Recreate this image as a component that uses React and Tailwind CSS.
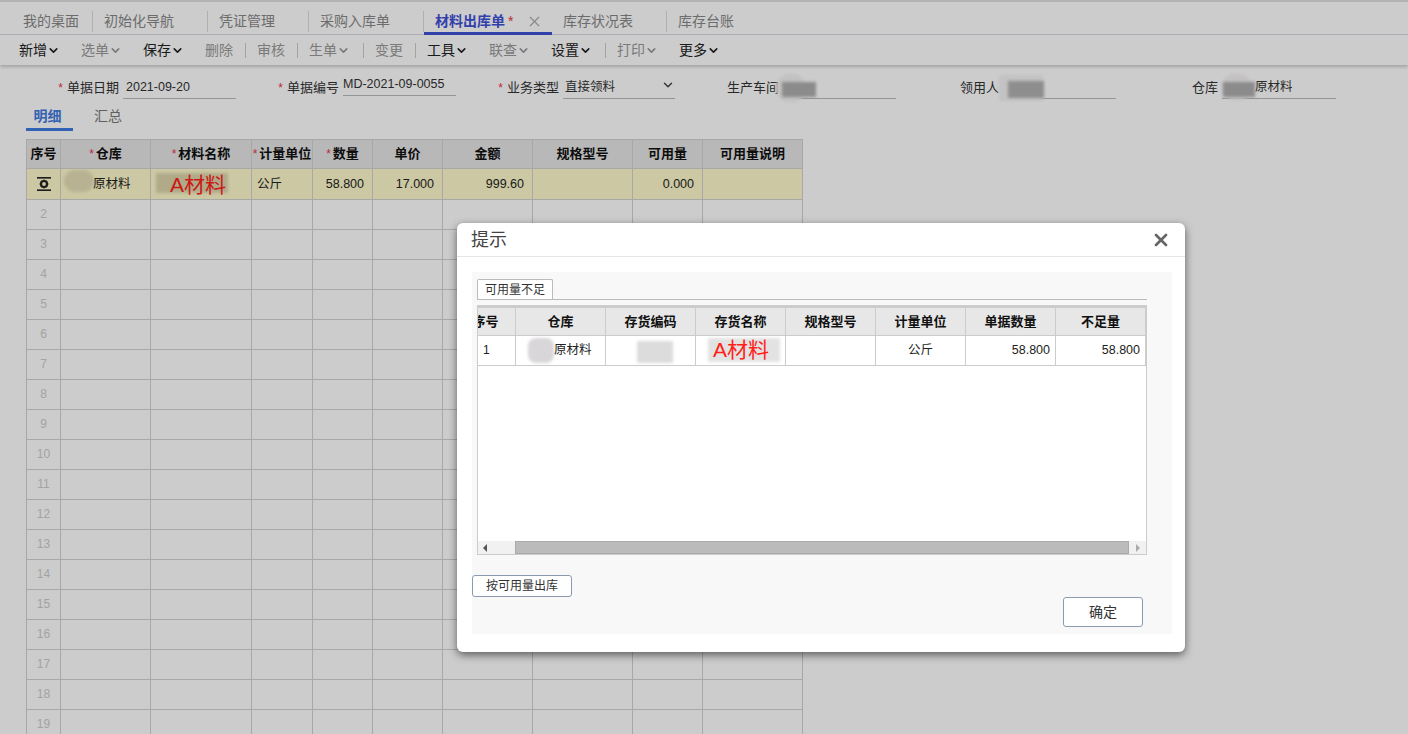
import React from "react";
import { ChevronDown, X } from "lucide-react";

const navTabs = [
  { name: "我的桌面", w: "w-[93px]" },
  { name: "初始化导航", w: "w-[115px]" },
  { name: "凭证管理", w: "w-[101px]" },
  { name: "采购入库单", w: "w-[115px]" },
  { name: "材料出库单", w: "w-[128px]", active: true },
  { name: "库存状况表", w: "w-[115px]" },
  { name: "库存台账", w: "w-[100px]" },
];

const tools = [
  { name: "新增", w: "w-[62px]", menu: true },
  { name: "选单", w: "w-[62px]", menu: true, dim: true },
  { name: "保存", w: "w-[62px]", menu: true },
  { name: "删除", w: "w-[52px]", dim: true, sep: true },
  { name: "审核", w: "w-[52px]", dim: true, sep: true },
  { name: "生单", w: "w-[66px]", menu: true, dim: true, sep: true },
  { name: "变更", w: "w-[52px]", dim: true, sep: true },
  { name: "工具", w: "w-[62px]", menu: true },
  { name: "联查", w: "w-[62px]", menu: true, dim: true },
  { name: "设置", w: "w-[66px]", menu: true, sep: true },
  { name: "打印", w: "w-[62px]", menu: true, dim: true },
  { name: "更多", w: "w-[62px]", menu: true },
];

const mainCols = ["w-[34px]", "w-[90px]", "w-[101px]", "w-[61px]", "w-[60px]", "w-[70px]", "w-[90px]", "w-[100px]", "w-[70px]", "w-[100px]"];
const mainHead = [
  { t: "序号" },
  { t: "仓库", req: true },
  { t: "材料名称", req: true },
  { t: "计量单位", req: true },
  { t: "数量", req: true },
  { t: "单价" },
  { t: "金额" },
  { t: "规格型号" },
  { t: "可用量" },
  { t: "可用量说明" },
];
const blankRows = [2, 3, 4, 5, 6, 7, 8, 9, 10, 11, 12, 13, 14, 15, 16, 17, 18, 19];

const dialogCols = ["w-[60px]", "w-[90px]", "w-[90px]", "w-[90px]", "w-[90px]", "w-[90px]", "w-[90px]", "w-[90px]"];
const dialogHead = ["序号", "仓库", "存货编码", "存货名称", "规格型号", "计量单位", "单据数量", "不足量"];

function Req() {
  return <span className="text-[#e8344e] font-normal text-[12px] mr-[4px]">*</span>;
}

function Field({ label, req, w, lineW, lineH = "h-[25px]", children }) {
  return (
    <div className={`flex items-center justify-end shrink-0 h-[28px] ${w}`}>
      {req && <Req />}
      <span className="text-[13px] text-[#333] whitespace-nowrap mr-[4px]">{label}</span>
      <div className={`relative self-start border-b border-[#bbb] flex items-center text-[12.5px] text-[#333] ${lineH} ${lineW}`}>
        {children}
      </div>
    </div>
  );
}

function Mosaic({ className }) {
  return <div className={`absolute blur-[1.5px] ${className}`} />;
}

function GearIcon() {
  return (
    <svg width="16" height="16" viewBox="0 0 16 16" className="mx-auto">
      <rect x="1" y="1" width="14" height="1.6" fill="#222" />
      <rect x="1" y="13.4" width="14" height="1.6" fill="#222" />
      <circle cx="8" cy="8" r="3" fill="none" stroke="#222" strokeWidth="2.2" />
      <path d="M8 3.6v1.6M8 10.8v1.6M3.6 8h1.6M10.8 8h1.6M4.9 4.9l1.1 1.1M10 10l1.1 1.1M4.9 11.1L6 10M10 6l1.1-1.1" stroke="#222" strokeWidth="1.3" />
    </svg>
  );
}

export default function App() {
  return (
    <div className="relative h-[734px] w-[1408px] overflow-hidden bg-white [font-family:'Liberation_Sans','Noto_Sans_CJK_SC',sans-serif]">
      {/* Top tabs */}
      <div className="flex items-stretch h-[35px] pt-[9px] border-t-2 border-[#e0e0e0] border-b border-b-[#dcdce8]">
        {navTabs.map((tab) =>
          tab.active ? (
            <div key={tab.name} className={`${tab.w} shrink-0 flex items-center pl-[11px] border-b-[3px] border-[#3f51d8] text-[14px] font-bold text-[#3f51d8] h-[24px]`}>
              {tab.name}
              <span className="text-[#e8344e] font-normal ml-[3px] text-[14px]">*</span>
              <X size={17} strokeWidth={1.6} className="ml-[13px] text-[#aaa]" />
            </div>
          ) : (
            <div key={tab.name} className={`${tab.w} shrink-0 h-[21px] flex items-center pl-[11px] first:pl-[23px] last:border-r-0 text-[14px] text-[#888] border-r border-[#ddd]`}>
              {tab.name}
            </div>
          )
        )}
      </div>

      {/* Toolbar */}
      <div className="flex items-center h-[30px] pl-[19px] shadow-[0_2px_3px_rgba(0,0,0,0.2)]">
        {tools.map((tool) => (
          <div key={tool.name} className={`${tool.w} shrink-0 flex items-center text-[14px] ${tool.dim ? "text-[#999]" : "text-[#222]"}`}>
            {tool.name}
            {tool.menu && <ChevronDown size={13} strokeWidth={3} />}
            {tool.sep && <span className="ml-auto mr-[11px] h-[15px] w-px bg-[#ccc]" />}
          </div>
        ))}
      </div>

      {/* Form row */}
      <div className="flex items-start pt-[9px] h-[42px]">
        <Field label="单据日期" req w="w-[236px]" lineW="w-[113px]">
          <span className="pl-[3px] pt-[2px]">2021-09-20</span>
        </Field>
        <Field label="单据编号" req w="w-[220px]" lineW="w-[113px]" lineH="h-[22px]">
          <span>MD-2021-09-0055</span>
        </Field>
        <Field label="业务类型" req w="w-[219px]" lineW="w-[112px]">
          <span className="pl-[2px] pt-[2px]">直接领料</span>
          <ChevronDown size={14} strokeWidth={2.5} className="absolute right-[0px] top-[4px] text-[#444]" />
        </Field>
        <Field label="生产车间" w="w-[221px]" lineW="w-[113px]">
          <Mosaic className="-left-[7px] top-[0px] w-[30px] h-[28px] rounded-full bg-[#f4f2f2]" />
          <Mosaic className="-left-[1px] top-[8px] w-[34px] h-[15px] bg-[#b0aeb0]" />
        </Field>
        <Field label="领用人" w="w-[220px]" lineW="w-[113px]">
          <Mosaic className="-left-[4px] top-[1px] w-[44px] h-[26px] bg-[#f4f4f4]" />
          <Mosaic className="left-[5px] top-[7px] w-[36px] h-[17px] bg-[#b2b2b2]" />
        </Field>
        <Field label="仓库" w="w-[220px]" lineW="w-[114px]">
          <Mosaic className="left-[0px] top-[0px] w-[30px] h-[26px] rounded-full bg-[#f4f2f2]" />
          <Mosaic className="left-[1px] top-[8px] w-[32px] h-[15px] bg-[#b0aeb0]" />
          <span className="relative pl-[33px] pt-[2px]">原材料</span>
        </Field>
      </div>

      {/* Detail tabs */}
      <div className="flex pl-[26px] h-[30px] text-[14px] leading-[18px]">
        <div className="w-[47px] h-[24px] flex justify-center pr-[4px] border-b-[3px] border-[#3f7be0] font-bold text-[#3f7be0]">明细</div>
        <div className="ml-[21px] text-[#777]">汇总</div>
      </div>

      {/* Main table */}
      <div className="ml-[26px] mt-[2px]">
        <table className="table-fixed border-collapse w-[776px] text-[12.5px] text-[#222]">
          <colgroup>
            {mainCols.map((c, i) => (
              <col key={i} className={c} />
            ))}
          </colgroup>
          <thead>
            <tr className="h-[29px] bg-[#e7e7e7]">
              {mainHead.map((h) => (
                <th key={h.t} className="border border-[#d3d3d3] text-[13px] font-bold text-[#111] whitespace-nowrap p-0">
                  {h.req && <span className="text-[#e8344e] font-normal text-[12px] mr-[2px]">*</span>}
                  {h.t}
                </th>
              ))}
            </tr>
          </thead>
          <tbody>
            <tr className="h-[30px] bg-[#fffbcc]">
              <td className="border border-[#d3d3d3]"><GearIcon /></td>
              <td className="relative border border-[#d3d3d3] pl-[32px]">
                <Mosaic className="left-[3px] top-[1px] w-[30px] h-[22px] rounded-full bg-[#e6dfb8]" />
                <span className="relative">原材料</span>
              </td>
              <td className="relative border border-[#d3d3d3] pt-[5px] leading-[22px]">
                <Mosaic className="left-[5px] top-[4px] w-[72px] h-[20px] bg-[#dcd5ac]" />
                <span className="relative pl-[19px] text-[21px] leading-[22px] text-[#ff2018]">A材料</span>
              </td>
              <td className="border border-[#d3d3d3] pl-[5px]">公斤</td>
              <td className="border border-[#d3d3d3] text-right pr-[8px]">58.800</td>
              <td className="border border-[#d3d3d3] text-right pr-[8px]">17.000</td>
              <td className="border border-[#d3d3d3] text-right pr-[8px]">999.60</td>
              <td className="border border-[#d3d3d3]"></td>
              <td className="border border-[#d3d3d3] text-right pr-[8px]">0.000</td>
              <td className="border border-[#d3d3d3]"></td>
            </tr>
            {blankRows.map((n) => (
              <tr key={n} className="h-[30px]">
                <td className="border border-[#d3d3d3] text-center text-[12px] text-[#ccc] pb-[1px]">{n}</td>
                {mainCols.slice(1).map((c, i) => (
                  <td key={i} className="border border-[#d3d3d3]"></td>
                ))}
              </tr>
            ))}
          </tbody>
        </table>
      </div>

      {/* Modal mask */}
      <div className="absolute inset-0 bg-black/20" />

      {/* Dialog */}
      <div className="absolute left-[457px] top-[223px] w-[728px] h-[429px] rounded-[6px] bg-white shadow-[0_3px_9px_rgba(0,0,0,0.55)] flex flex-col">
        <div className="h-[34px] shrink-0 border-b border-[#e5e5e5] flex items-center justify-between pt-[1px] pl-[14px] pr-[14px]">
          <span className="text-[18px] text-[#444]">提示</span>
          <X size={20} strokeWidth={3.2} className="text-[#666]" />
        </div>
        <div className="mt-[15px] mx-[15px] w-[700px] h-[362px] bg-[#f8f8f8] flex flex-col pt-[7px]">
          <div className="ml-[5px] w-[670px] h-[21px] shrink-0 border-b border-[#bbb]">
            <div className="w-[76px] h-[20px] bg-white border border-b-0 border-[#bbb] rounded-t-[2px] flex items-center justify-center text-[12px] text-[#333]">
              可用量不足
            </div>
          </div>
          <div className="ml-[5px] mt-[5px] w-[670px] h-[250px] shrink-0 border border-[#ccc] bg-white flex flex-col overflow-hidden">
            <div className="flex-1 overflow-hidden">
              <table className="table-fixed border-collapse w-[690px] -ml-[23px] text-[12.5px] text-[#222]">
                <colgroup>
                  {dialogCols.map((c, i) => (
                    <col key={i} className={c} />
                  ))}
                </colgroup>
                <thead>
                  <tr className="h-[28px] bg-[#e7e7e7]">
                    {dialogHead.map((h) => (
                      <th key={h} className="border border-t-2 border-[#ccc] text-[13px] font-bold text-[#111] p-0">{h}</th>
                    ))}
                  </tr>
                </thead>
                <tbody>
                  <tr className="h-[30px]">
                    <td className="border border-[#ccc] pl-[27px] text-[12px]">1</td>
                    <td className="relative border border-[#ccc] pl-[38px]">
                      <Mosaic className="left-[12px] top-[2px] w-[26px] h-[25px] rounded-[8px] bg-[#d8d6d8]" />
                      <span className="relative">原材料</span>
                    </td>
                    <td className="relative border border-[#ccc]">
                      <Mosaic className="left-[31px] top-[5px] w-[36px] h-[22px] bg-[#dcdcdc]" />
                    </td>
                    <td className="relative border border-[#ccc] pt-[2px] leading-[22px]">
                      <Mosaic className="left-[12px] top-[2px] w-[72px] h-[24px] bg-[#e2e2e2]" />
                      <span className="relative pl-[17px] text-[21px] leading-[22px] text-[#ff2018]">A材料</span>
                    </td>
                    <td className="border border-[#ccc]"></td>
                    <td className="border border-[#ccc] text-center">公斤</td>
                    <td className="border border-[#ccc] text-right pr-[5px]">58.800</td>
                    <td className="border border-[#ccc] text-right pr-[5px]">58.800</td>
                  </tr>
                </tbody>
              </table>
            </div>
            {/* Scrollbar */}
            <div className="h-[13px] shrink-0 bg-[#f1f1f1] flex items-center">
              <div className="w-[37px] pl-[5px] flex items-center">
                <span className="w-0 h-0 border-y-[4px] border-y-transparent border-r-[4px] border-r-[#555]" />
              </div>
              <div className="w-[614px] h-[13px] bg-[#bbb] border border-[#aaa]" />
              <div className="flex-1 flex justify-center">
                <span className="w-0 h-0 border-y-[4px] border-y-transparent border-l-[4px] border-l-[#aaa]" />
              </div>
            </div>
          </div>
          <button className="mt-[20px] w-[100px] h-[22px] shrink-0 bg-white border border-[#8c9ab0] rounded-[3px] text-[12px] text-[#333]">
            按可用量出库
          </button>
          <button className="self-end mr-[29px] w-[80px] h-[30px] shrink-0 bg-white border border-[#8c9ab0] rounded-[3px] text-[14px] text-[#333]">
            确定
          </button>
        </div>
      </div>
    </div>
  );
}
